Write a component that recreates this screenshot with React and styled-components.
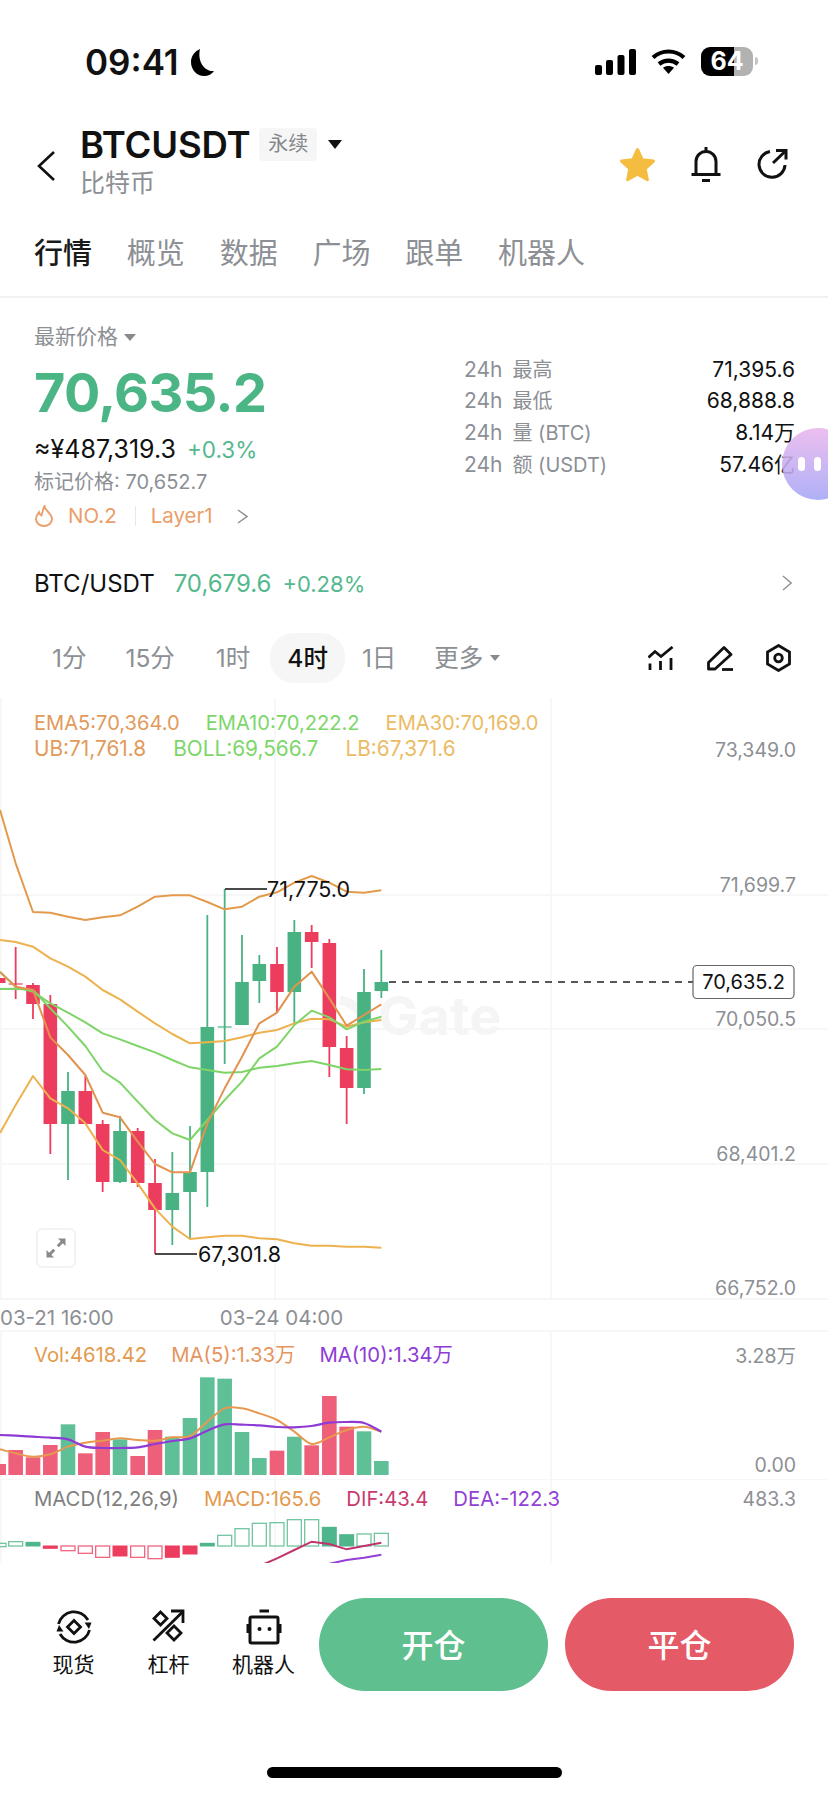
import React from "react";
import styled, { createGlobalStyle } from "styled-components";

const GREEN = "#4bb585";
const GREY = "#8c8f94";

const Global = createGlobalStyle`
  html, body {
    margin: 0;
    padding: 0;
    background: #fff;
  }
  * {
    box-sizing: border-box;
  }
  body {
    font-family: Inter, "Noto Sans CJK SC", sans-serif;
    color: #111;
  }
`;

const Page = styled.div`
  width: 828px;
  height: 1796px;
  overflow: hidden;
  background: #fff;
  position: relative;
`;

/* status bar */
const StatusBar = styled.div`
  height: 124px;
  padding: 46px 75px 0 85px;
  display: flex;
  justify-content: space-between;
`;
const TimeGroup = styled.div`
  display: flex;
  align-items: flex-start;
  gap: 10px;
`;
const Clock = styled.span`
  font-size: 35px;
  line-height: 32px;
  font-weight: 600;
`;
const StatusIcons = styled.div`
  display: flex;
  align-items: flex-start;
  gap: 15px;
`;
const Battery = styled.div`
  width: 52px;
  height: 29px;
  margin-top: 1px;
  border-radius: 9px;
  background: linear-gradient(90deg, #000 63%, #b2b2b2 63%);
  color: #fff;
  font-size: 25px;
  line-height: 29px;
  font-weight: 700;
  text-align: center;
  position: relative;
  &::after {
    content: "";
    position: absolute;
    right: -5px;
    top: 10px;
    width: 3px;
    height: 8px;
    border-radius: 0 3px 3px 0;
    background: #c4c4c4;
  }
`;

/* header */
const Header = styled.div`
  height: 84px;
  padding: 0 40px 0 37px;
  display: flex;
  align-items: center;
`;
const TitleBlock = styled.div`
  margin: 0 0 8px 25px;
  flex: 1;
`;
const TitleRow = styled.div`
  display: flex;
  align-items: center;
  height: 40px;
`;
const Title = styled.span`
  font-size: 36.5px;
  line-height: 40px;
  font-weight: 600;
  letter-spacing: -0.2px;
`;
const Tag = styled.span`
  margin-left: 9px;
  width: 58px;
  height: 33px;
  border-radius: 4px;
  background: #f6f6f6;
  color: #85888c;
  font-size: 20px;
  line-height: 33px;
  text-align: center;
`;
const Caret = styled.span`
  margin-left: ${(p) => p.$gap || 11}px;
  width: 0;
  height: 0;
  border-left: ${(p) => p.$size}px solid transparent;
  border-right: ${(p) => p.$size}px solid transparent;
  border-top: ${(p) => p.$size * 1.25}px solid ${(p) => p.$color};
`;
const SubTitle = styled.div`
  margin-top: 1px;
  font-size: 25px;
  line-height: 34px;
  color: ${GREY};
`;
const Actions = styled.div`
  display: flex;
  align-items: center;
  gap: 35px;
  margin-top: -4px;
`;

/* tabs */
const Tabs = styled.div`
  height: 90px;
  padding: 4px 34px 0;
  display: flex;
  align-items: center;
  gap: 34.8px;
  border-bottom: 2px solid #f2f2f2;
`;
const Tab = styled.span`
  font-size: 29px;
  line-height: 36px;
  font-weight: ${(p) => (p.$active ? 500 : 400)};
  color: ${(p) => (p.$active ? "#1a1a1a" : GREY)};
`;

/* price section */
const PriceSection = styled.div`
  height: 242px;
  padding: 26px 33px 0 34px;
  display: flex;
  justify-content: space-between;
`;
const PriceLeft = styled.div`
  display: flex;
  flex-direction: column;
`;
const PriceLabel = styled.div`
  display: flex;
  align-items: center;
  font-size: 21px;
  line-height: 26px;
  color: ${GREY};
`;
const BigPrice = styled.div`
  margin-top: 13px;
  font-size: 54px;
  line-height: 60px;
  font-weight: 700;
  color: ${GREEN};
  letter-spacing: -0.6px;
`;
const FiatRow = styled.div`
  margin-top: 13px;
  display: flex;
  align-items: baseline;
  gap: 11px;
  font-size: 25px;
  line-height: 26px;
`;
const Up = styled.span`
  color: #55b88e;
  font-size: 22.5px;
`;
const MarkPrice = styled.div`
  margin-top: 6px;
  font-size: 20px;
  line-height: 26px;
  color: ${GREY};
`;
const RankRow = styled.div`
  margin-top: 8px;
  display: flex;
  align-items: center;
  font-size: 20.5px;
  line-height: 26px;
  color: #ea9e69;
`;
const RankDivider = styled.span`
  width: 1px;
  height: 20px;
  margin: 0 15px 0 18px;
  background: #f0e6dc;
`;
const Stats = styled.div`
  width: 331px;
  margin-top: 30px;
`;
const StatRow = styled.div`
  height: 31.6px;
  display: flex;
  align-items: center;
  justify-content: space-between;
  font-size: 21px;
  line-height: 24px;
`;
const StatLabel = styled.span`
  color: ${GREY};
  display: flex;
  align-items: center;
  gap: 10px;
`;
const StatName = styled.span`
  font-size: 20px;
  line-height: 24px;
`;
const FloatBall = styled.div`
  position: absolute;
  top: 428px;
  left: 782px;
  width: 72px;
  height: 72px;
  border-radius: 50%;
  background: linear-gradient(180deg, #eab6ee, #a5a6f6);
  opacity: 0.88;
  padding: 29px 0 0 16px;
  display: flex;
  gap: 9px;
`;
const BallDot = styled.span`
  width: 7px;
  height: 14px;
  border-radius: 4px;
  background: #fff;
`;

/* spot row */
const SpotRow = styled.div`
  height: 86px;
  padding: 0 36px 0 34px;
  display: flex;
  align-items: center;
  font-size: 24px;
`;
const SpotPrice = styled.span`
  margin-left: 19px;
  flex: 1;
  color: #55b88e;
  display: flex;
  align-items: baseline;
  gap: 11px;
`;
const SpotChange = styled.span`
  font-size: 22px;
`;

/* timeframe row */
const TimeRow = styled.div`
  height: 72px;
  padding: 0 37px 8px 52px;
  display: flex;
  align-items: center;
  font-size: 24.5px;
`;
const Frame = styled.span`
  color: ${(p) => (p.$active ? "#111" : GREY)};
  font-weight: ${(p) => (p.$active ? 500 : 400)};
  background: ${(p) => (p.$active ? "#f6f6f6" : "transparent")};
  height: 50px;
  line-height: 50px;
  border-radius: 24px;
  padding: 0 ${(p) => (p.$active ? 17 : 0)}px;
  margin-right: ${(p) => p.$mr}px;
  display: flex;
  align-items: center;
`;
const ChartTools = styled.div`
  margin-left: auto;
  display: flex;
  align-items: center;
  gap: 33px;
`;

/* charts */
const Panel = styled.div`
  position: relative;
  height: ${(p) => p.$h}px;
  padding-top: ${(p) => p.$pt}px;
`;
const ChartLayer = styled.svg`
  position: absolute;
  left: 0;
  top: 0;
  display: block;
  overflow: hidden;
`;
const Legend = styled.div`
  position: relative;
  display: flex;
  gap: ${(p) => p.$gap}px;
  padding-left: 34px;
  font-size: ${(p) => p.$fs || 20.3}px;
  line-height: 25px;
  white-space: nowrap;
`;
const LegendItem = styled.span`
  color: ${(p) => p.$color};
`;
const Axis = styled.div`
  position: absolute;
  top: 0;
  right: 32px;
  bottom: 0;
  padding: ${(p) => p.$pt}px 0 ${(p) => p.$pb}px;
  display: flex;
  flex-direction: column;
  justify-content: space-between;
  align-items: flex-end;
  font-size: 19.5px;
  line-height: 20px;
  color: ${GREY};
`;
const ExpandButton = styled.div`
  position: absolute;
  left: 36px;
  top: 530px;
  width: 40px;
  height: 40px;
  border: 2px solid #f2f2f2;
  border-radius: 6px;
  background: #fff;
  display: flex;
  align-items: center;
  justify-content: center;
`;
const TimeAxis = styled.div`
  height: 34px;
  padding-top: 4px;
  display: flex;
  align-items: center;
  gap: 106px;
  font-size: 20.5px;
  color: ${GREY};
  border-top: 2px solid #f6f6f6;
  border-bottom: 2px solid #f6f6f6;
`;

/* bottom */
const BottomBar = styled.div`
  height: 127px;
  padding: 35px 34px 0 26px;
  display: flex;
  align-items: flex-start;
`;
const NavItem = styled.div`
  width: 95px;
  padding-top: 11px;
  display: flex;
  flex-direction: column;
  align-items: center;
  font-size: 21px;
  line-height: 20px;
  gap: 10px;
  white-space: nowrap;
`;
const TradeButton = styled.div`
  width: 229px;
  height: 93px;
  margin-left: ${(p) => p.$ml}px;
  padding-bottom: 3px;
  border-radius: 47px;
  background: ${(p) => p.$bg};
  color: #fff;
  font-size: 32px;
  font-weight: 500;
  display: flex;
  align-items: center;
  justify-content: center;
`;
const HomeBar = styled.div`
  width: 295px;
  height: 11px;
  margin: 77px auto 0;
  border-radius: 6px;
  background: #000;
`;

/* chart data, read off the picture in page pixels */
const XS = [47, 99, 151, 204, 256, 308, 360, 413, 465, 517, 570, 622, 674, 726, 778, 831, 883, 935, 988, 1040, 1092, 1144].map((v) => v / 3);

const CANDLES = [
  [0, "r", 984, 984.5, 947, 999],
  [1, "r", 985, 1004, 983, 1019],
  [2, "r", 1004, 1124, 995, 1154],
  [3, "g", 1091, 1124, 1072, 1180],
  [4, "r", 1091, 1124, 1076, 1124],
  [5, "r", 1124, 1182, 1120, 1192],
  [6, "g", 1131, 1182, 1116, 1183],
  [7, "r", 1131, 1183, 1128, 1187],
  [8, "r", 1183, 1210, 1159, 1254],
  [9, "g", 1193, 1210, 1152, 1245],
  [10, "g", 1172, 1192, 1126, 1238],
  [11, "g", 1027, 1172, 915, 1207],
  [12, "g", 1027, 1027.5, 889, 1064],
  [13, "g", 982, 1025, 935, 1025],
  [14, "g", 964, 981, 955, 1003],
  [15, "r", 964, 992, 947, 1013],
  [16, "g", 932, 992, 920, 1023],
  [17, "r", 932, 942, 925, 968],
  [18, "r", 943, 1047, 939, 1077],
  [19, "r", 1048, 1088, 1036, 1124],
  [20, "g", 992, 1088, 969, 1094],
  [21, "g", 982, 991, 950, 998],
];

const fromTop = (ys) => ys.map((y) => 700 + y / 3);
const fromMid = (ys) => ys.map((y) => 960 + y / 3);

const MAIN_LINES = [
  {
    color: "#e39a4b",
    first: [0, 810],
    ys: fromTop([490, 636, 638, 650, 660, 652, 646, 620, 590, 586, 586, 606, 628, 620, 590, 577, 548, 528, 548, 575, 578, 571]),
  },
  {
    color: "#edb24f",
    first: [0, 940],
    ys: fromTop([726, 740, 775, 800, 830, 870, 898, 935, 970, 1002, 1030, 1027, 1023, 1012, 998, 990, 970, 956, 958, 980, 967, 960]),
  },
  {
    color: "#7fd468",
    first: [0, 972],
    ys: fromMid([80, 95, 130, 158, 187, 220, 238, 258, 277, 300, 322, 330, 338, 336, 323, 318, 310, 303, 315, 328, 330, 327]),
  },
  {
    color: "#7fd468",
    first: [0, 989],
    ys: fromMid([86, 90, 145, 200, 258, 333, 368, 425, 480, 520, 540, 480, 420, 365, 295, 260, 195, 152, 172, 208, 185, 170]),
  },
  {
    color: "#edb24f",
    first: [0, 1133],
    ys: fromMid([435, 348, 415, 445, 490, 570, 600, 670, 745, 800, 837, 832, 827, 827, 835, 838, 850, 857, 857, 860, 860, 863]),
  },
  {
    color: "#e1934f",
    first: [0, 972],
    ys: fromMid([80, 90, 232, 285, 345, 458, 472, 545, 612, 637, 637, 490, 385, 290, 190, 158, 80, 35, 115, 197, 165, 133]),
  },
];

const VOL_BARS = [
  [9, "r", 432], [47, "r", 390], [99, "r", 412], [151, "r", 375], [204, "g", 313], [256, "r", 400],
  [308, "r", 336], [360, "g", 358], [413, "r", 408], [465, "r", 330], [517, "g", 350], [570, "g", 294],
  [622, "g", 172], [674, "g", 176], [726, "g", 336], [778, "g", 414], [831, "r", 392], [883, "g", 350],
  [935, "r", 376], [988, "r", 228], [1040, "r", 320], [1092, "g", 334], [1144, "g", 423],
];
const VOL_X = [0, ...XS.map((x) => x * 3)];
const MA5 = [388, 400, 410, 403, 380, 368, 362, 355, 360, 362, 352, 348, 305, 265, 265, 280, 300, 335, 372, 352, 330, 320, 335];
const MA10 = [345, 347, 350, 353, 358, 380, 384, 384, 382, 372, 363, 355, 332, 313, 314, 316, 321, 322, 318, 308, 306, 309, 335];

const MACD_BARS = [
  [9, "g", 670, 680, false], [47, "g", 665, 678, false], [99, "g", 667, 678, true], [151, "r", 678, 685, true],
  [204, "r", 678, 692, false], [256, "r", 678, 700, false], [308, "r", 678, 712, false], [360, "r", 678, 708, true],
  [413, "r", 678, 712, false], [465, "r", 678, 716, false], [517, "r", 678, 712, true], [570, "r", 678, 702, true],
  [622, "g", 670, 678, true], [674, "g", 646, 678, false], [726, "g", 626, 678, false], [778, "g", 610, 678, false],
  [831, "g", 608, 678, false], [883, "g", 599, 678, false], [935, "g", 599, 678, false], [988, "g", 622, 678, true],
  [1040, "g", 644, 678, true], [1092, "g", 642, 678, false], [1144, "g", 640, 678, false],
];
const DIF = [[785, 735], [831, 715], [883, 690], [935, 665], [988, 672], [1040, 688], [1092, 678], [1144, 668]];
const DEA = [[985, 732], [1040, 720], [1092, 713], [1144, 704]];

const smooth = (pts) => {
  let d = `M${pts[0][0]} ${pts[0][1]}`;
  for (let i = 0; i < pts.length - 1; i++) {
    const p0 = pts[i - 1] || pts[i];
    const p1 = pts[i];
    const p2 = pts[i + 1];
    const p3 = pts[i + 2] || p2;
    const c1 = [p1[0] + (p2[0] - p0[0]) / 6, p1[1] + (p2[1] - p0[1]) / 6];
    const c2 = [p2[0] - (p3[0] - p1[0]) / 6, p2[1] - (p3[1] - p1[1]) / 6];
    d += ` C${c1[0]} ${c1[1]} ${c2[0]} ${c2[1]} ${p2[0]} ${p2[1]}`;
  }
  return d;
};
const volY = (z) => 1320 + z / 3;
const toPoints = (list) => list.map(([x, y]) => `${x / 3},${volY(y)}`).join(" ");

const MainChart = () => (
  <ChartLayer width="828" height="600" viewBox="0 698 828 600">
    <g stroke="#f7f7f7" strokeWidth="2">
      <line x1="0" x2="828" y1="895" y2="895" />
      <line x1="0" x2="828" y1="1029" y2="1029" />
      <line x1="0" x2="828" y1="1164" y2="1164" />
      <line x1="1" x2="1" y1="698" y2="1298" />
      <line x1="275" x2="275" y1="698" y2="1298" />
      <line x1="551" x2="551" y1="698" y2="1298" />
    </g>
    <path d="M340 1000 Q362 1004 366 1030" fill="none" stroke="#f5f5f5" strokeWidth="9" />
    <text x="378" y="1035" fontSize="54" fontWeight="700" fill="#f5f5f5" fontFamily="Inter, sans-serif">Gate</text>
    <rect x="0" y="978" width="5.5" height="5" fill="#ec3d5e" />
    {CANDLES.map(([i, c, top, bottom, hi, lo]) => {
      const color = c === "g" ? "#49b283" : "#ec3d5e";
      const x = XS[i];
      const thin = bottom - top < 1;
      return (
        <g key={i}>
          <line x1={x} x2={x} y1={hi} y2={lo} stroke={color} strokeWidth="1.8" />
          {thin ? (
            <line x1={x - 7} x2={x + 7} y1={top} y2={top} stroke={color} strokeWidth="1.2" />
          ) : (
            <rect x={x - 6.8} y={top} width="13.6" height={bottom - top} fill={color} />
          )}
        </g>
      );
    })}
    {MAIN_LINES.map((l, i) => (
      <polyline
        key={i}
        points={[l.first.join(","), ...l.ys.map((y, k) => `${XS[k]},${y}`)].join(" ")}
        fill="none"
        stroke={l.color}
        strokeWidth="2"
        strokeLinejoin="round"
      />
    ))}
    <path d="M225 889H267M155 1254H197" stroke="#111" strokeWidth="1.6" fill="none" />
    <text x="267" y="897" fontSize="21.5" fill="#111" fontFamily="Inter, sans-serif">71,775.0</text>
    <text x="198" y="1262" fontSize="21.5" fill="#111" fontFamily="Inter, sans-serif">67,301.8</text>
    <line x1="389" x2="693" y1="982" y2="982" stroke="#222" strokeWidth="1.4" strokeDasharray="7 6" />
    <rect x="693" y="965.5" width="101" height="33" rx="4" fill="#fff" stroke="#666" strokeWidth="1.2" />
    <text x="743.5" y="989" fontSize="20" fill="#111" textAnchor="middle" fontFamily="Inter, sans-serif">70,635.2</text>
  </ChartLayer>
);

const VolumeChart = () => (
  <ChartLayer width="828" height="148" viewBox="0 1332 828 148">
    <path d="M1 1332V1480M275 1332V1480M551 1332V1480M0 1480H828" stroke="#f7f7f7" strokeWidth="2" fill="none" />
    {VOL_BARS.map(([z, c, top]) => (
      <rect
        key={z}
        x={z === 9 ? 0 : z / 3 - 7.3}
        y={volY(top)}
        width={z === 9 ? 6 : 14.6}
        height={1475 - volY(top)}
        fill={c === "g" ? "#5fbf96" : "#ee5f7a"}
      />
    ))}
    <path d={smooth(MA5.map((y, i) => [VOL_X[i] / 3, volY(y)]))} fill="none" stroke="#e8994f" strokeWidth="2" />
    <path d={smooth(MA10.map((y, i) => [VOL_X[i] / 3, volY(y)]))} fill="none" stroke="#8e3bd6" strokeWidth="2.2" />
  </ChartLayer>
);

const MacdChart = () => (
  <ChartLayer width="828" height="83" viewBox="0 1480 828 83">
    <path d="M1 1480V1563M275 1480V1563M551 1480V1563" stroke="#f7f7f7" strokeWidth="2" fill="none" />
    {MACD_BARS.map(([z, c, a, b, filled]) => {
      const color = c === "g" ? "#4fb58a" : "#ec3d5e";
      const x = z === 9 ? -4 : z / 3 - 7;
      const w = z === 9 ? 10 : 14;
      const y = volY(a);
      const h = (b - a) / 3;
      return filled ? (
        <rect key={z} x={x - 0.5} y={y - 0.5} width={w + 1} height={h + 1} fill={color} />
      ) : (
        <rect key={z} x={x} y={y} width={w} height={h} fill="none" stroke={color} strokeOpacity="0.8" strokeWidth="1.3" />
      );
    })}
    <polyline points={toPoints(DIF)} fill="none" stroke="#c0356c" strokeWidth="2" />
    <polyline points={toPoints(DEA)} fill="none" stroke="#9340d6" strokeWidth="2" />
  </ChartLayer>
);

/* icons */
const Moon = () => (
  <svg width="26" height="29" viewBox="0 0 26 29" style={{ marginTop: 2 }}>
    <path d="M11 1C6 3 2 8 2 14c0 8 6 14 13 14 4.500 0 8-2 10-5-9 1-17-9-14-22z" fill="#000" />
  </svg>
);
const Signal = () => (
  <svg width="41" height="26" viewBox="0 0 41 26" style={{ marginTop: 3 }}>
    <rect x="0" y="16" width="7" height="10" rx="2" />
    <rect x="11" y="11" width="7" height="15" rx="2" />
    <rect x="22.500" y="6" width="7" height="20" rx="2" />
    <rect x="34" y="0" width="7" height="26" rx="2" />
  </svg>
);
const Wifi = () => (
  <svg width="35" height="26" viewBox="0 0 35 26" fill="none" stroke="#000" strokeWidth="4.200" style={{ marginTop: 2 }}>
    <path d="M2 9.500C11 1.500 24 1.500 33 9.500" />
    <path d="M8 16C13.500 11.500 21.500 11.500 27 16" />
    <path d="M17.500 26l-5.500-6.200c3-2.300 8-2.300 11 0z" fill="#000" stroke="none" />
  </svg>
);
const Back = () => (
  <svg width="18" height="30" viewBox="0 0 18 30" fill="none" stroke="#111" strokeWidth="2.600">
    <path d="M17 1L2 15l15 14" />
  </svg>
);
const Star = () => (
  <svg width="37" height="35" viewBox="0 0 37 35">
    <path
      d="M18.500 2.500l4.800 10.300 11.200 1.300-8.300 7.600 2.200 11-9.900-5.500-9.900 5.500 2.200-11-8.300-7.600 11.200-1.300z"
      fill="#f5bd3f"
      stroke="#f5bd3f"
      strokeWidth="3"
      strokeLinejoin="round"
    />
  </svg>
);
const Bell = () => (
  <svg width="30" height="36" viewBox="0 0 30 36" fill="none" stroke="#111" strokeWidth="3">
    <path d="M5 28V15.500a10 10 0 0 1 20 0V28" />
    <path d="M0.500 28.500H29.500" />
    <path d="M11 34.500H19" />
    <path d="M15 1v4" />
  </svg>
);
const Share = () => (
  <svg width="32" height="32" viewBox="0 0 32 32" fill="none" stroke="#111" strokeWidth="3">
    <path d="M14 3.500A13 13 0 1 0 29 17" />
    <path d="M17 15L29.500 3" />
    <path d="M20 2.500H30V11.500" />
  </svg>
);
const Flame = () => (
  <svg width="20" height="22" viewBox="0 0 20 22" fill="none" stroke="#ea9e69" strokeWidth="1.900" style={{ marginRight: 14 }}>
    <path d="M10.500 1c.5 5 7.500 7.500 7.500 13.200a8 6.800 0 0 1-16 0c0-3.200 1.500-4.700 3-7 .5 1.700 1.500 2.800 2.500 3.300 1-3 1.500-6.500 3-9.500z" />
  </svg>
);
const Chevron = ({ color = GREY, w = 11, h = 16, ml = 0 }) => (
  <svg width={w} height={h} viewBox="0 0 11 16" fill="none" stroke={color} strokeWidth="1.500" style={{ marginLeft: ml }} preserveAspectRatio="none">
    <path d="M1 1l9 7-9 7" />
  </svg>
);
const IndicatorIcon = () => (
  <svg width="26" height="24" viewBox="0 0 26 24" fill="none" stroke="#111" strokeWidth="2.800">
    <path d="M0.500 11.500L7 5.500l6 5L24.500 1" />
    <path d="M2 17.500V24M12.500 15V24M23 12V24" />
  </svg>
);
const PenIcon = () => (
  <svg width="26" height="25" viewBox="0 0 26 25" fill="none" stroke="#111" strokeWidth="2.800" strokeLinejoin="round">
    <path d="M1.500 23V16.500L17 1.500l7 7L8 23z" />
    <path d="M15 23.500H26" />
  </svg>
);
const HexIcon = () => (
  <svg width="25" height="28" viewBox="0 0 25 28" fill="none" stroke="#111" strokeWidth="2.800">
    <path d="M12.500 1.500L23.500 8V20L12.500 26.500L1.500 20V8Z" />
    <circle cx="12.500" cy="14" r="3.800" />
  </svg>
);
const ExpandIcon = () => (
  <svg width="22" height="22" viewBox="0 0 22 22" fill="#8a8a8a" stroke="none">
    <path d="M13 1.500H20.500V9L17.800 6.300 13.800 10.300 11.700 8.200 15.700 4.200z" />
    <path d="M9 20.500H1.500V13L4.200 15.700 8.200 11.700 10.300 13.800 6.300 17.800z" />
  </svg>
);
const SpotIcon = () => (
  <svg width="36" height="36" viewBox="0 0 36 36" fill="none" stroke="#111" strokeWidth="2.800">
    <path d="M2.500 15A16 16 0 0 1 32 11" />
    <path d="M33.500 21A16 16 0 0 1 4 25" />
    <path d="M28.500 13.500H35.500L33 20z" fill="#111" stroke="none" />
    <path d="M7.500 22.500H0.500L3 16z" fill="#111" stroke="none" />
    <path d="M18 11.500L24.500 18L18 24.500L11.500 18Z" />
  </svg>
);
const LeverageIcon = () => (
  <svg width="34" height="36" viewBox="0 0 34 36" fill="none" stroke="#111" strokeWidth="2.800">
    <path d="M1.500 31.500L30.500 3" />
    <path d="M19 2H31V14" />
    <path d="M8.500 3L15 9.500L8.500 16L2 9.500Z" />
    <path d="M22 17L29 24L22 31L15 24Z" />
  </svg>
);
const RobotIcon = () => (
  <svg width="38" height="36" viewBox="0 0 38 36" fill="none" stroke="#111" strokeWidth="3">
    <path d="M14.500 2H24" />
    <rect x="5" y="8" width="28" height="26" rx="1.500" />
    <path d="M3 15V24M35 15V24" />
    <circle cx="14.500" cy="20" r="2" fill="#111" stroke="none" />
    <circle cx="24.500" cy="20" r="2" fill="#111" stroke="none" />
  </svg>
);

const STATS = [
  ["最高", "71,395.6"],
  ["最低", "68,888.8"],
  ["量 (BTC)", "8.14万"],
  ["额 (USDT)", "57.46亿"],
];
const TABS = ["行情", "概览", "数据", "广场", "跟单", "机器人"];

const App = () => (
  <Page>
    <Global />
    <StatusBar>
      <TimeGroup>
        <Clock>09:41</Clock>
        <Moon />
      </TimeGroup>
      <StatusIcons>
        <Signal />
        <Wifi />
        <Battery>64</Battery>
      </StatusIcons>
    </StatusBar>

    <Header>
      <Back />
      <TitleBlock>
        <TitleRow>
          <Title>BTCUSDT</Title>
          <Tag>永续</Tag>
          <Caret $size={7.5} $color="#111" />
        </TitleRow>
        <SubTitle>比特币</SubTitle>
      </TitleBlock>
      <Actions>
        <Star />
        <Bell />
        <Share />
      </Actions>
    </Header>

    <Tabs>
      {TABS.map((t, i) => (
        <Tab key={t} $active={i === 0}>
          {t}
        </Tab>
      ))}
    </Tabs>

    <PriceSection>
      <PriceLeft>
        <PriceLabel>
          最新价格
          <Caret $size={6} $gap={6} $color="#8a8a8a" />
        </PriceLabel>
        <BigPrice>70,635.2</BigPrice>
        <FiatRow>
          <span>≈¥487,319.3</span>
          <Up>+0.3%</Up>
        </FiatRow>
        <MarkPrice>标记价格: 70,652.7</MarkPrice>
        <RankRow>
          <Flame />
          NO.2
          <RankDivider />
          Layer1
          <Chevron ml={24} h={15} />
        </RankRow>
      </PriceLeft>
      <Stats>
        {STATS.map(([label, value]) => (
          <StatRow key={label}>
            <StatLabel>
              <span>24h</span>
              <StatName>{label}</StatName>
            </StatLabel>
            <span>{value}</span>
          </StatRow>
        ))}
      </Stats>
    </PriceSection>
    <FloatBall>
      <BallDot />
      <BallDot />
    </FloatBall>

    <SpotRow>
      BTC/USDT
      <SpotPrice>
        <span>70,679.6</span>
        <SpotChange>+0.28%</SpotChange>
      </SpotPrice>
      <Chevron w={10} h={16} />
    </SpotRow>

    <TimeRow>
      <Frame $mr={39}>1分</Frame>
      <Frame $mr={41}>15分</Frame>
      <Frame $mr={20}>1时</Frame>
      <Frame $active $mr={17}>4时</Frame>
      <Frame $mr={38}>1日</Frame>
      <Frame $mr={0}>
        更多
        <Caret $size={5.5} $gap={7} $color="#8a8a8a" />
      </Frame>
      <ChartTools>
        <IndicatorIcon />
        <PenIcon />
        <HexIcon />
      </ChartTools>
    </TimeRow>

    <Panel $h={600} $pt={13}>
      <MainChart />
      <Legend $gap={26} $fs={20.1}>
        <LegendItem $color="#e29a5b">EMA5:70,364.0</LegendItem>
        <LegendItem $color="#7dd66a">EMA10:70,222.2</LegendItem>
        <LegendItem $color="#ebbb63">EMA30:70,169.0</LegendItem>
      </Legend>
      <Legend $gap={27} $fs={20.8}>
        <LegendItem $color="#e29a5b">UB:71,761.8</LegendItem>
        <LegendItem $color="#7dd66a">BOLL:69,566.7</LegendItem>
        <LegendItem $color="#ebbb63">LB:67,371.6</LegendItem>
      </Legend>
      <Axis $pt={42} $pb={0}>
        <span>73,349.0</span>
        <span>71,699.7</span>
        <span>70,050.5</span>
        <span>68,401.2</span>
        <span>66,752.0</span>
      </Axis>
      <ExpandButton>
        <ExpandIcon />
      </ExpandButton>
    </Panel>

    <TimeAxis>
      <span>03-21 16:00</span>
      <span>03-24 04:00</span>
    </TimeAxis>

    <Panel $h={148} $pt={10}>
      <VolumeChart />
      <Legend $gap={24}>
        <LegendItem $color="#e39a4e">Vol:4618.42</LegendItem>
        <LegendItem $color="#e59560">MA(5):1.33万</LegendItem>
        <LegendItem $color="#8e3bd6">MA(10):1.34万</LegendItem>
      </Legend>
      <Axis $pt={14} $pb={5}>
        <span>3.28万</span>
        <span>0.00</span>
      </Axis>
    </Panel>

    <Panel $h={83} $pt={6}>
      <MacdChart />
      <Legend $gap={25}>
        <LegendItem $color="#808080">MACD(12,26,9)</LegendItem>
        <LegendItem $color="#e39a4e">MACD:165.6</LegendItem>
        <LegendItem $color="#c93a6e">DIF:43.4</LegendItem>
        <LegendItem $color="#9240d5">DEA:-122.3</LegendItem>
      </Legend>
      <Axis $pt={9} $pb={0}>
        <span>483.3</span>
      </Axis>
    </Panel>

    <BottomBar>
      <NavItem>
        <SpotIcon />
        现货
      </NavItem>
      <NavItem>
        <LeverageIcon />
        杠杆
      </NavItem>
      <NavItem>
        <RobotIcon />
        机器人
      </NavItem>
      <TradeButton $bg="#5fbf8f" $ml={8}>开仓</TradeButton>
      <TradeButton $bg="#e55a67" $ml={17}>平仓</TradeButton>
    </BottomBar>
    <HomeBar />
  </Page>
);

export default App;
